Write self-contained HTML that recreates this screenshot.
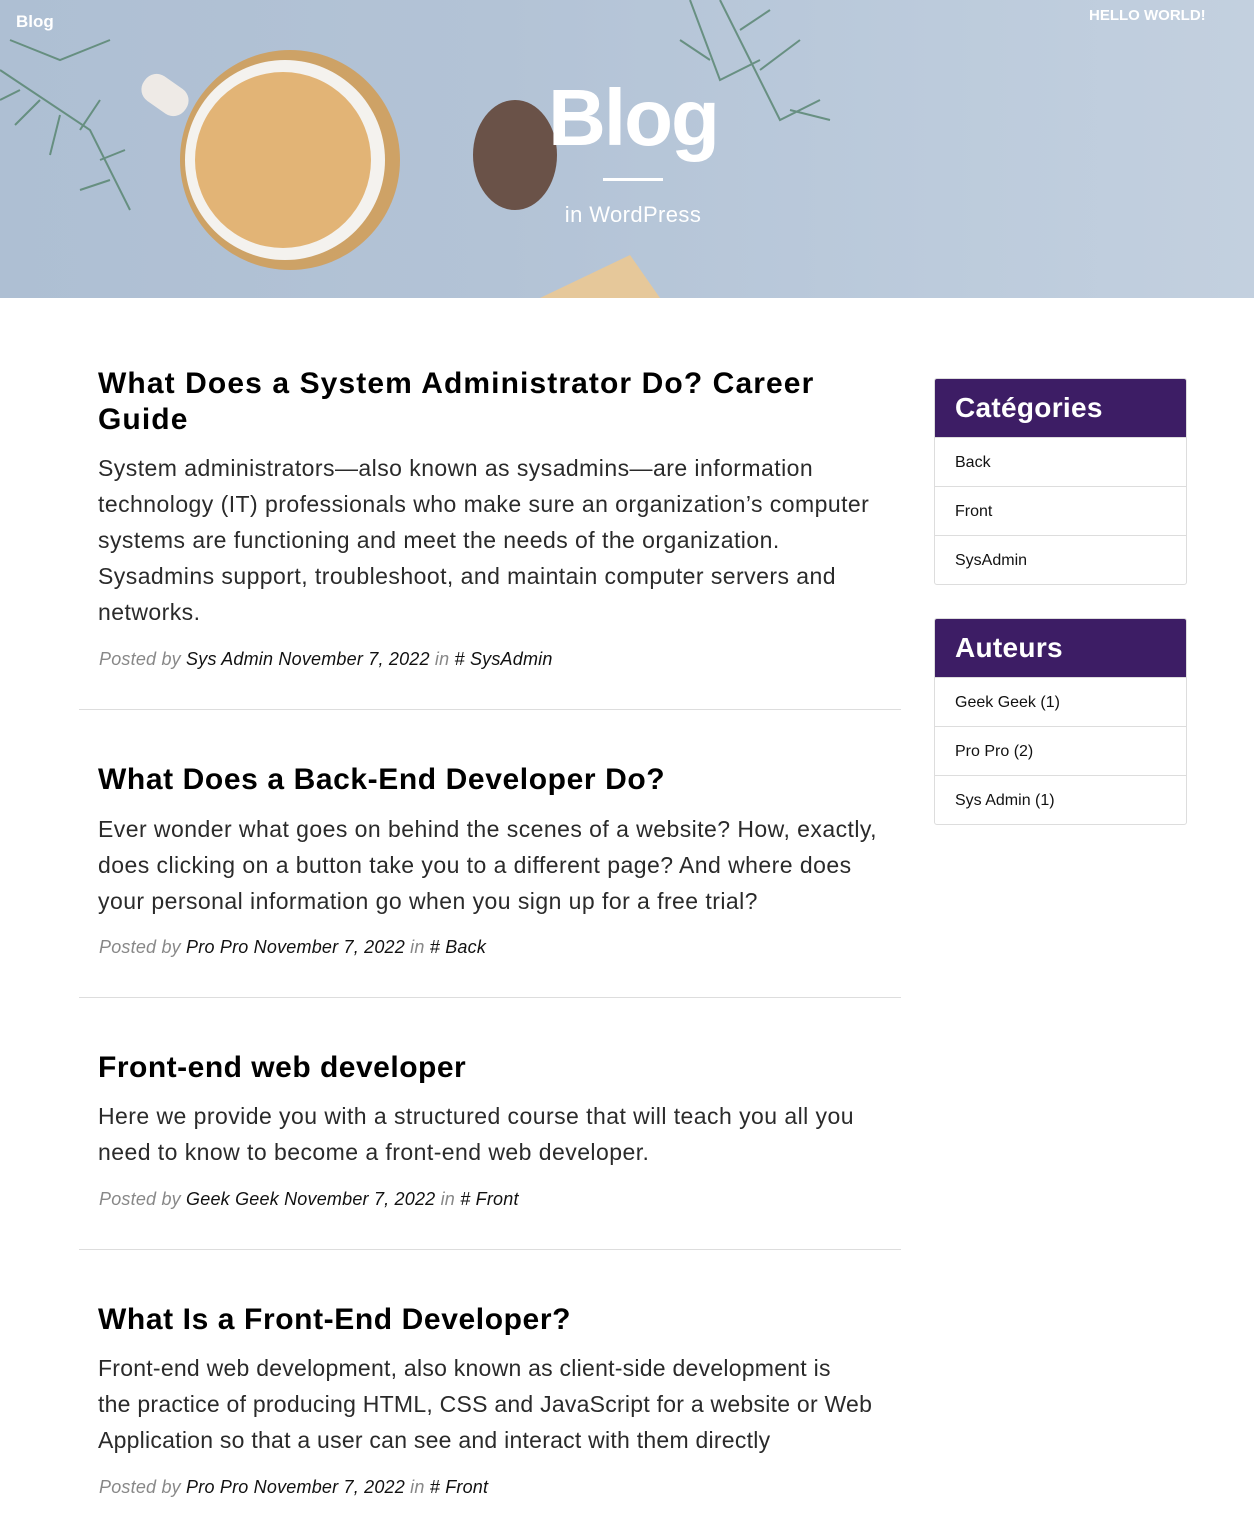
<!DOCTYPE html>
<html><head><meta charset="utf-8">
<style>
*{margin:0;padding:0;box-sizing:border-box}
body{width:1254px;height:1521px;position:relative;background:#fff;font-family:"Liberation Sans","DejaVu Sans",sans-serif;overflow:hidden}
.hdr{position:absolute;left:0;top:0;width:1254px;height:298px;background:linear-gradient(90deg,#aebfd3 0%,#b3c3d6 40%,#bccbdc 75%,#c3d0df 100%);overflow:hidden}
.abs{position:absolute}
.t{position:absolute;left:98px;font-size:30px;font-weight:bold;color:#000;line-height:36px;white-space:nowrap;letter-spacing:1.1px}
.b{position:absolute;left:98px;font-size:23px;color:#2a2a2a;line-height:36px;white-space:nowrap;letter-spacing:0.45px}
.m{position:absolute;left:99px;font-size:18px;font-style:italic;color:#111;white-space:nowrap;line-height:24px;letter-spacing:0.2px}
.m span{color:#888}
.hr{position:absolute;left:79px;width:822px;height:1px;background:#ddd}
.box{position:absolute;left:934px;width:253px;border:1px solid #ddd;border-radius:3px;overflow:hidden;background:#fff}
.box h3{background:#3d1d65;color:#fff;font-size:28px;font-weight:bold;height:58px;line-height:58px;padding-left:20px;letter-spacing:0.3px}
.box div{height:49px;line-height:49px;padding-left:20px;font-size:16px;color:#111;border-top:1px solid #ddd}
</style></head><body>
<div class="hdr">
  <svg class="abs" style="left:0;top:0" width="1254" height="298">
    <g stroke="#5f8a78" stroke-width="2" fill="none" opacity="0.9">
      <path d="M0 70 L90 130 L130 210"/><path d="M10 40 L60 60 L110 40"/>
      <path d="M20 90 l-20 10 M40 100 l-25 25 M60 115 l-10 40 M80 130 l20 -30 M100 160 l25 -10 M110 180 l-30 10"/>
      <path d="M690 0 L720 80 L760 60 M720 0 L780 120 L820 100 M740 30 l30 -20 M760 70 l40 -30 M790 110 l40 10 M680 40 l30 20"/>
    </g>
    <circle cx="290" cy="160" r="110" fill="#d49a4a" opacity="0.8"/>
    <circle cx="285" cy="160" r="100" fill="#f4f2ee"/>
    <circle cx="283" cy="160" r="88" fill="#e2b476"/>
    <rect x="140" y="80" width="50" height="30" rx="14" fill="#eeeae6" transform="rotate(35 165 95)"/>
    <ellipse cx="515" cy="155" rx="42" ry="55" fill="#6a5248"/>
    <polygon points="540,298 630,255 660,298" fill="#e6c89a"/>
  </svg>
  <div class="abs" style="left:16px;top:12px;color:#fff;font-weight:bold;font-size:17px">Blog</div>
  <div class="abs" style="left:1089px;top:7px;color:#fff;font-weight:bold;font-size:15px">HELLO WORLD!</div>
  <div class="abs" style="left:0;width:1266px;top:70px;text-align:center;color:#fff;font-weight:bold;font-size:80px;line-height:96px;letter-spacing:-2px">Blog</div>
  <div class="abs" style="left:603px;top:178px;width:60px;height:3px;background:#fff"></div>
  <div class="abs" style="left:0;width:1266px;top:202px;text-align:center;color:#fff;font-size:22px;letter-spacing:0.4px">in WordPress</div>
</div>

<div class="t" style="top:366px">What Does a System Administrator Do? Career<br>Guide</div>
<div class="b" style="top:450px">System administrators—also known as sysadmins—are information<br>technology (IT) professionals who make sure an organization’s computer<br>systems are functioning and meet the needs of the organization.<br>Sysadmins support, troubleshoot, and maintain computer servers and<br>networks.</div>
<div class="m" style="top:647px"><span>Posted by</span> Sys Admin November 7, 2022 <span>in</span> # SysAdmin</div>
<div class="hr" style="top:709px"></div>

<div class="t" style="top:762px;letter-spacing:0.6px">What Does a Back-End Developer Do?</div>
<div class="b" style="top:811px">Ever wonder what goes on behind the scenes of a website? How, exactly,<br>does clicking on a button take you to a different page? And where does<br>your personal information go when you sign up for a free trial?</div>
<div class="m" style="top:935px"><span>Posted by</span> Pro Pro November 7, 2022 <span>in</span> # Back</div>
<div class="hr" style="top:997px"></div>

<div class="t" style="top:1050px;letter-spacing:0.5px">Front-end web developer</div>
<div class="b" style="top:1098px">Here we provide you with a structured course that will teach you all you<br>need to know to become a front-end web developer.</div>
<div class="m" style="top:1187px"><span>Posted by</span> Geek Geek November 7, 2022 <span>in</span> # Front</div>
<div class="hr" style="top:1249px"></div>

<div class="t" style="top:1302px;letter-spacing:0.6px">What Is a Front-End Developer?</div>
<div class="b" style="top:1350px;letter-spacing:0.25px">Front-end web development, also known as client-side development is<br>the practice of producing HTML, CSS and JavaScript for a website or Web<br>Application so that a user can see and interact with them directly</div>
<div class="m" style="top:1475px"><span>Posted by</span> Pro Pro November 7, 2022 <span>in</span> # Front</div>

<div class="box" style="top:378px"><h3>Catégories</h3><div>Back</div><div>Front</div><div>SysAdmin</div></div>
<div class="box" style="top:618px"><h3>Auteurs</h3><div>Geek Geek (1)</div><div>Pro Pro (2)</div><div>Sys Admin (1)</div></div>
</body></html>
